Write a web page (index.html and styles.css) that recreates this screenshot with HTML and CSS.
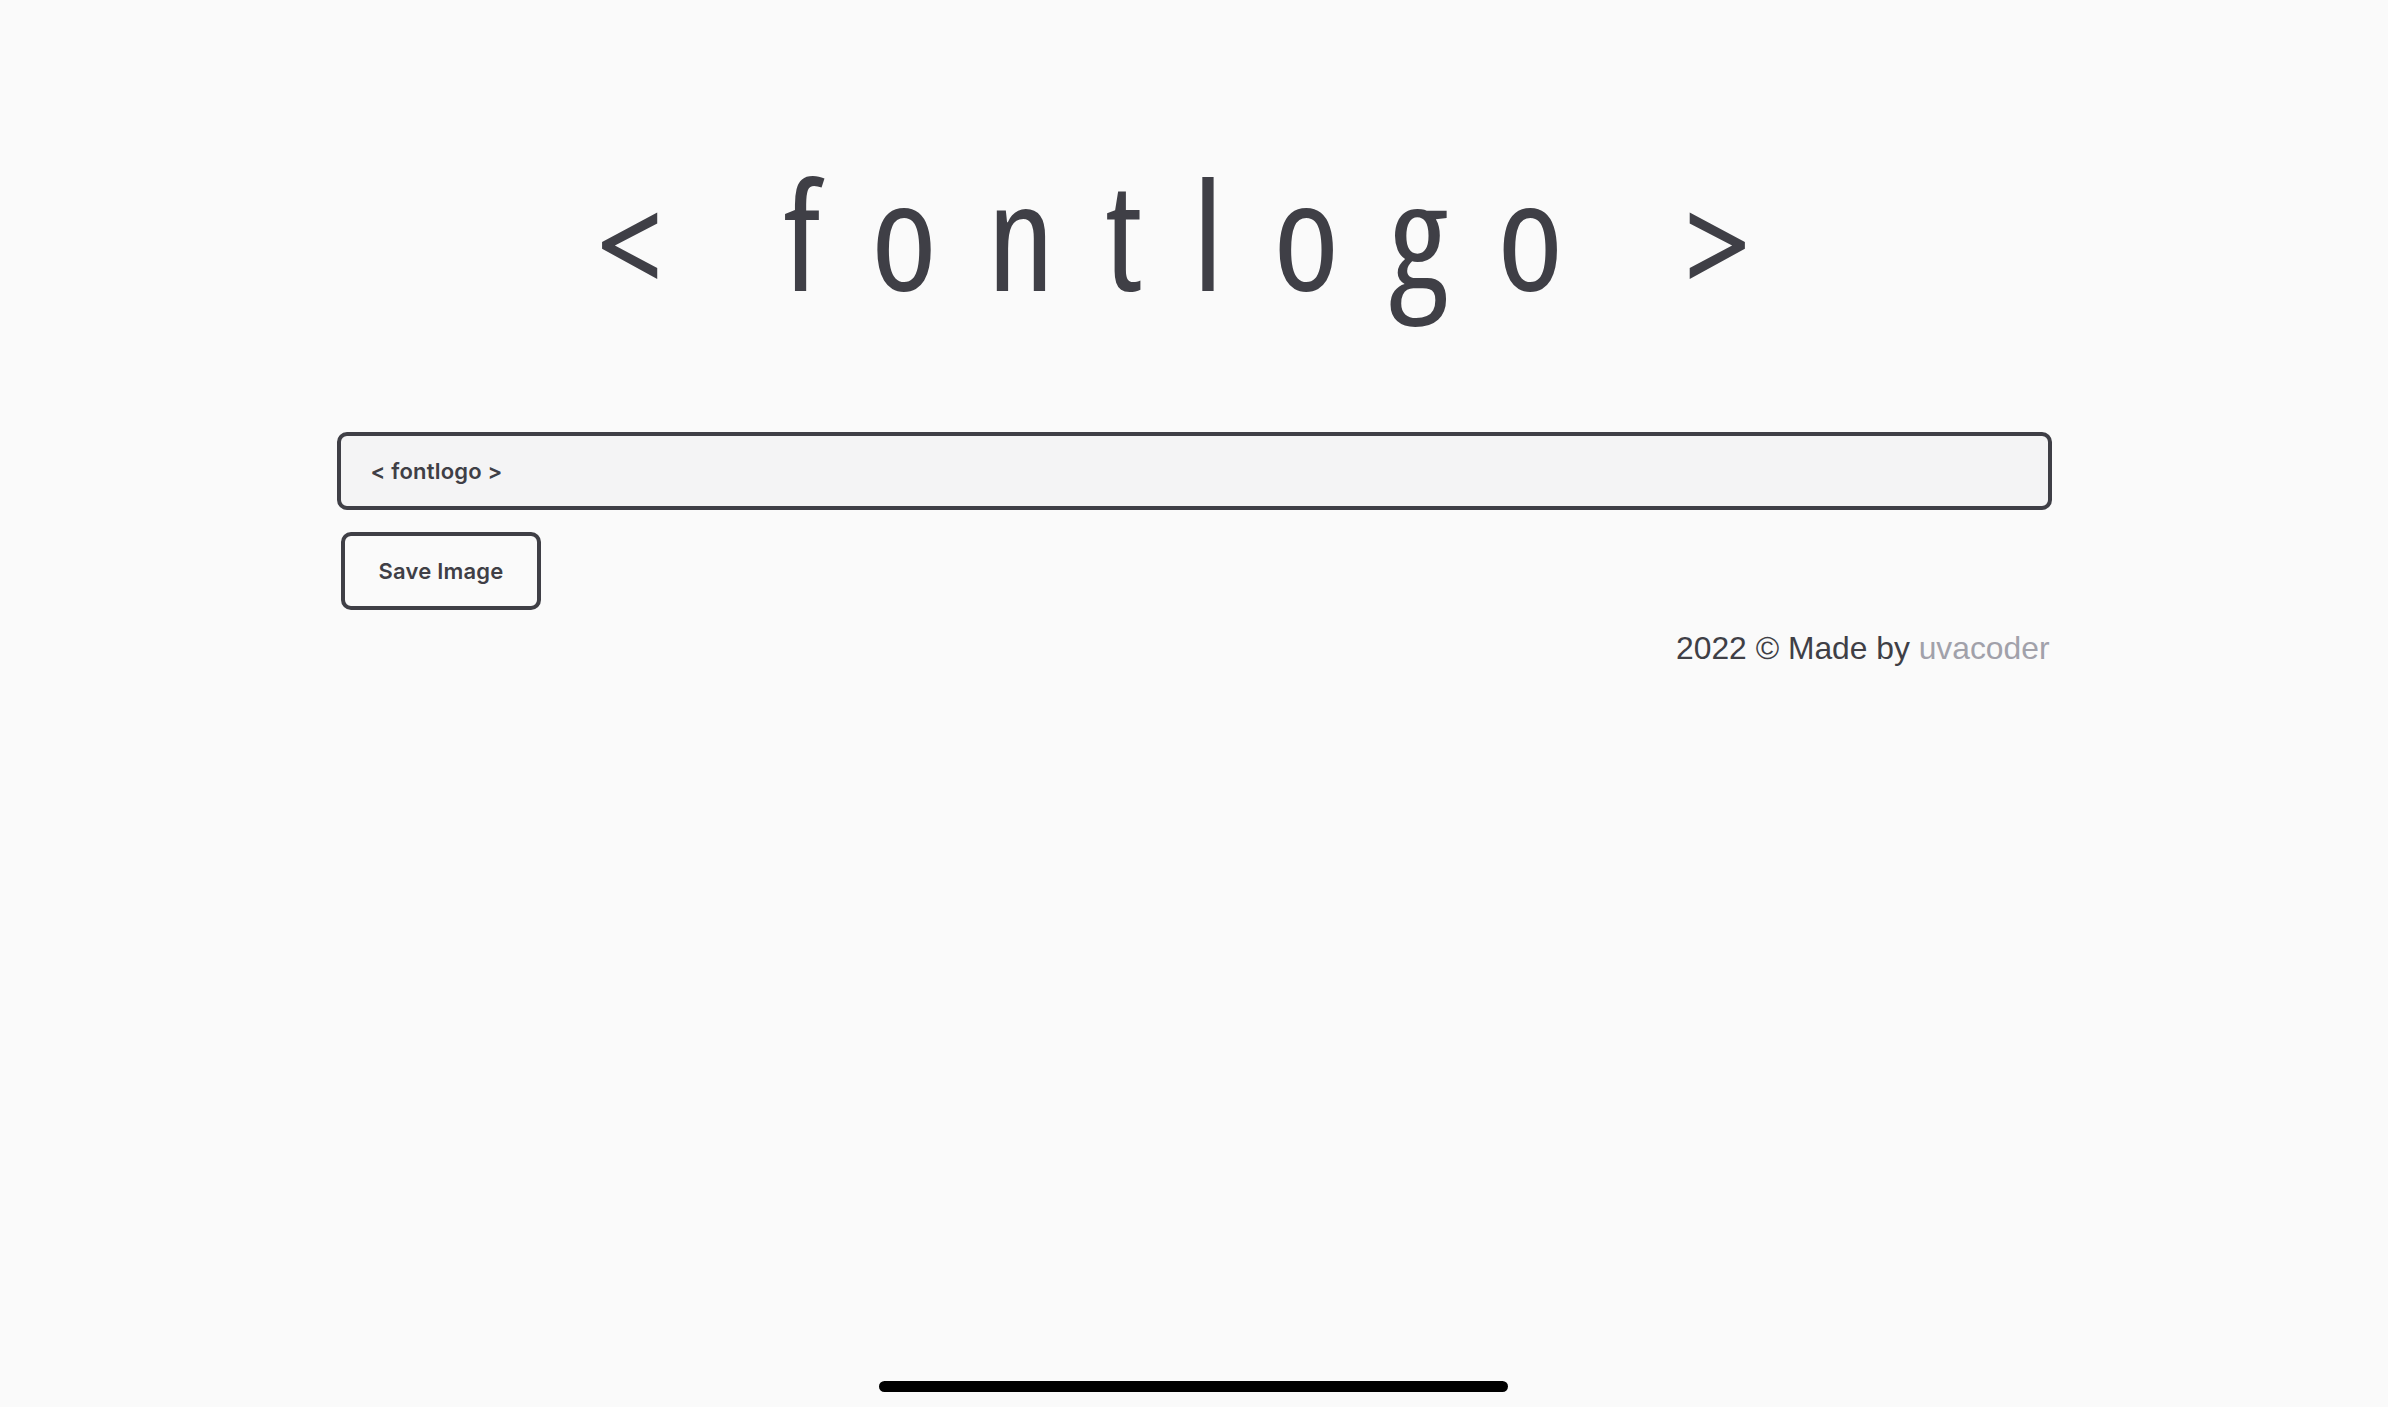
FILE: index.html
```html
<!DOCTYPE html>
<html lang="en">
<head>
<meta charset="utf-8">
<title>fontlogo</title>
<link rel="stylesheet" href="styles.css">
</head>
<body>
<main class="page">
  <h1 class="logo"><span class="chev">&lt;</span> fontlogo <span class="chev">&gt;</span></h1>
  <div class="controls">
    <input class="text-input" type="text" value="< fontlogo >">
    <button class="save-btn" type="button">Save Image</button>
    <footer class="footer">2022 © Made by <a class="author" href="#">uvacoder</a></footer>
  </div>
</main>
<div class="home-indicator"></div>
</body>
</html>
```
FILE: styles.css
```css
html, body {
  margin: 0;
  padding: 0;
  background: #fafafa;
  color: #3f3f46;
}

.page {
  display: flex;
  flex-direction: column;
  align-items: center;
}

.logo {
  height: 150px;
  margin: 158px 0 0;
  padding-left: 9px;
  font-family: "Open Sans", sans-serif;
  font-weight: 400;
  font-stretch: 83%;
  font-size: 150px;
  line-height: 150px;
  letter-spacing: 50px;
  word-spacing: -6px;
  color: #3f3f46;
  white-space: nowrap;
}

.chev {
  vertical-align: -8px;
  line-height: 0;
}

.controls {
  width: 1715px;
  margin-top: 124px;
  display: flex;
  flex-direction: column;
  align-items: flex-start;
}

.text-input {
  box-sizing: border-box;
  width: 100%;
  height: 78px;
  margin: 0;
  padding: 0 30px;
  border: 4px solid #3f3f46;
  border-radius: 10px;
  background: #f4f4f5;
  color: #3f3f46;
  font-family: Inter, "Noto Sans", sans-serif;
  font-weight: 600;
  font-size: 22px;
  letter-spacing: 0.2px;
  outline: none;
}

.save-btn {
  box-sizing: border-box;
  height: 78px;
  margin: 22px 0 0 4px;
  padding: 0 34px;
  border: 4px solid #3f3f46;
  border-radius: 10px;
  background: #fafafa;
  color: #3f3f46;
  font-family: Inter, "Noto Sans", sans-serif;
  font-weight: 600;
  font-size: 22px;
  letter-spacing: 0.2px;
  cursor: pointer;
}

.footer {
  align-self: stretch;
  box-sizing: border-box;
  margin-top: 20px;
  padding-right: 2px;
  text-align: right;
  font-family: "Liberation Sans", Arial, sans-serif;
  font-size: 31.8px;
  line-height: 36px;
  color: #3f3f46;
}

.author {
  color: #a1a1aa;
  text-decoration: none;
}

.home-indicator {
  position: fixed;
  left: 50%;
  bottom: 15px;
  width: 629px;
  height: 11px;
  margin-left: -315px;
  border-radius: 6px;
  background: #000;
}
```
